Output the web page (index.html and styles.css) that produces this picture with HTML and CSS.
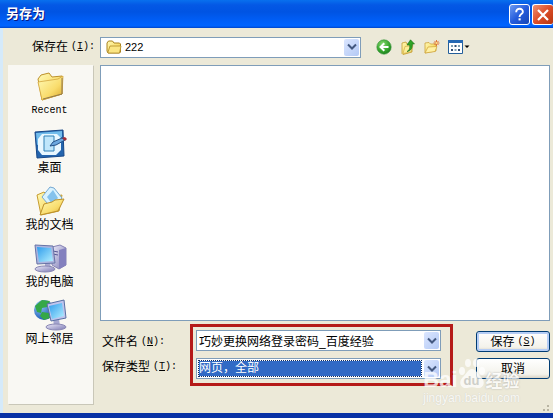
FILE: index.html
```html
<!DOCTYPE html>
<html lang="zh-CN">
<head>
<meta charset="utf-8">
<title>另存为</title>
<link rel="stylesheet" href="styles.css">
</head>
<body>
<svg class="defs" aria-hidden="true">
  <defs>
    <linearGradient id="gold" x1="0" y1="0" x2="1" y2="1"><stop offset="0" stop-color="#fffbb8"/><stop offset=".6" stop-color="#f9dc6c"/><stop offset="1" stop-color="#d9a52b"/></linearGradient>
    <linearGradient id="screen" x1="0" y1="0" x2="1" y2="1"><stop offset="0" stop-color="#2f9cec"/><stop offset="1" stop-color="#b4f0ff"/></linearGradient>
    <linearGradient id="metal" x1="0" y1="0" x2="1" y2="1"><stop offset="0" stop-color="#eceaf8"/><stop offset="1" stop-color="#7b79b4"/></linearGradient>
    <radialGradient id="green" cx=".4" cy=".3" r=".8"><stop offset="0" stop-color="#86d870"/><stop offset=".6" stop-color="#35a52c"/><stop offset="1" stop-color="#12731a"/></radialGradient>
    <radialGradient id="globe" cx=".3" cy=".3" r=".8"><stop offset="0" stop-color="#8fc8f8"/><stop offset="1" stop-color="#134faf"/></radialGradient>
  </defs>
</svg>
<main class="dialog">
  <header class="titlebar">
    <h1>另存为</h1>
    <button class="caption help" aria-label="帮助"><svg viewBox="0 0 20 20"><path d="M6.500 7.500C6.500 2.500 14 3 13.500 7.500C13.200 9.500 10 9.500 10 12.500" fill="none" stroke="#fff" stroke-width="2"/><path d="M9 14h2.200v2.200H9z" fill="#fff"/></svg></button>
    <button class="caption close" aria-label="关闭"><svg viewBox="0 0 20 20"><path d="M5 5l10 10M15 5L5 15" stroke="#fff" stroke-width="2.200"/></svg></button>
  </header>
  <div class="content">
    <div class="lookin">
      <label for="folder">保存在<span class="key">(<u>I</u>):</span></label>
      <div class="combo">
        <svg class="folder" viewBox="0 0 16 14"><path d="M1 11V3l1.500-2h4L8 3h5.500l1 1v8l-1 1H2z" fill="url(#gold)" stroke="#a98220"/><path d="M2 12l2-6h11l-1.500 7H2z" fill="#fbe583" stroke="#b38d29" stroke-width=".8"/></svg>
        <select id="folder"><option>222</option></select>
        <span class="arrow"><svg viewBox="0 0 10 8"><path d="M1 1.500l4 4 4-4" /></svg></span>
      </div>
      <nav class="tools">
        <button aria-label="后退"><svg viewBox="0 0 16 16"><circle cx="8" cy="8" r="7.200" fill="url(#green)" stroke="#38923a" stroke-width=".6"/><path d="M12.500 8H5M8.300 4.200L4.500 8l3.800 3.800" fill="none" stroke="#fff" stroke-width="2"/></svg></button>
        <button aria-label="向上"><svg viewBox="0 0 16 16"><path d="M2 4l4-1 1 2 5-1v9l-9 2.500-1-1z" fill="url(#gold)" stroke="#c39c30" stroke-width=".8"/><path d="M3 14.500l2-7 8-1-2 6.500z" fill="#fdee98" stroke="#c8a440" stroke-width=".6"/><path d="M7 12.500c2.500-1 3-3.500 2.700-6.500H7L10.500.8 14.500 5h-2.200c.2 4-1.300 7-5.300 7.500z" fill="#2fa526" stroke="#146c15" stroke-width=".6"/></svg></button>
        <button aria-label="新建文件夹"><svg viewBox="0 0 16 16"><path d="M1 14V4l4-.5L6.500 5H12v7z" fill="url(#gold)" stroke="#cda23a" stroke-width=".8"/><path d="M1 14l3-6 9-.5-2 5z" fill="#fff1a4" stroke="#cda23a" stroke-width=".7"/><path d="M12.500 1v6M9.500 4h6M10.400 1.900l4.200 4.200M14.600 1.900l-4.200 4.200" stroke="#dd7439" stroke-width="1"/><circle cx="12.500" cy="4" r="1" fill="#ffe58b"/></svg></button>
        <button class="views" aria-label="查看"><svg viewBox="0 0 22 16"><path d="M.5 1.500h14v13H.5z" fill="#fff" stroke="#245f9a"/><path d="M0 1h15v3H0z" fill="#2468b4"/><path d="M3 6h2v2H3zM10 6h2v2h-2zM6.500 10h2v2h-2z" fill="#7f9fb1"/><path d="M6.500 6h2v2h-2zM3 10h2v2H3zM10 10h2v2h-2z" fill="#314e75"/><path d="M16.500 6.500h5L19 9z" fill="#000"/></svg></button>
      </nav>
    </div>
    <aside class="places">
      <button><svg viewBox="0 0 34 32"><path d="M5 8l3-4 8-2 3 4 10-1v18L9 29z" fill="url(#gold)" stroke="#bd912b"/><path d="M5 11l20-3 5-3-1 18-20 6z" fill="url(#gold)" stroke="#d3a63d" stroke-width=".8"/><path d="M10 28l19-5V7" fill="none" stroke="#937b4a" stroke-width="1"/></svg><span class="key">Recent</span></button>
      <button><svg viewBox="0 0 34 32"><path d="M2 4l28-2 1 26-27 2z" fill="#2465ae" stroke="#174888"/><path d="M3 5l26-2v6L4 17z" fill="#72bdec"/><path d="M9 6h15l4 4v12l-5 5H9l-4-5V11z" fill="#e8f7ff"/><path d="M11 8h10v15H11z" fill="#bfe6fb" stroke="#3180b5"/><path d="M17 18l3-4 9-4 3 2-9 5z" fill="#6ca8df" stroke="#245288"/><path d="M29 10l3-1 2 2-2 2z" fill="#a22f39"/></svg><span>桌面</span></button>
      <button><svg viewBox="0 0 34 32"><path d="M4 10l7-3 5 5 13-2-3 16-18 4z" fill="url(#gold)" stroke="#c79d30"/><path d="M9 12l8-10 4 1 8 10-9 12z" fill="#d9f3ff" stroke="#75a8d1"/><path d="M14 12l6-7 5 8-6 6z" fill="#83c2ed"/><path d="M7 30l4-11 8-2 3-2 9-1-6 12z" fill="url(#gold)" stroke="#bd912b"/></svg><span>我的文档</span></button>
      <button><svg viewBox="0 0 34 32"><path d="M19 5l8-2 6 3v17l-7 4-7-4z" fill="url(#metal)" stroke="#8582b4"/><path d="M26 8l7-2v17l-7 4z" fill="#8481be"/><path d="M20 9l5 1M20 12l5 1" stroke="#575795"/><path d="M12 20h5l1 6h-6z" fill="#aaa9d0"/><ellipse cx="12" cy="27" rx="10" ry="3" fill="url(#metal)" stroke="#8987b4"/><path d="M2 3l18 1 2 17-18 1z" fill="#adb5df" stroke="#6773a5"/><path d="M4 5l14 1 2 13-14 1z" fill="url(#screen)"/></svg><span>我的电脑</span></button>
      <button><svg viewBox="0 0 34 32"><circle cx="11" cy="11" r="10" fill="url(#globe)"/><path d="M2 7l7-6 8 1-3 6-5 1-1 5-4-1zM9 13l7 1 1 5-6 2-4-4z" fill="#35a847"/><path d="M20 20h6l1 7h-6z" fill="#a6a7d0"/><ellipse cx="23" cy="28" rx="10" ry="3" fill="url(#metal)" stroke="#8987b4"/><path d="M14 5l17-4 2 18-15 3z" fill="#bfc4ed" stroke="#5970a3"/><path d="M16 7l13-3 2 13-12 3z" fill="url(#screen)"/></svg><span>网上邻居</span></button>
    </aside>
    <section class="files" aria-label="文件列表"></section>
    <form class="fields">
      <div class="labels">
        <label for="name">文件名<span class="key">(<u>N</u>):</span></label>
        <label for="type">保存类型<span class="key">(<u>T</u>):</span></label>
      </div>
      <div class="highlight">
        <div class="combo">
          <input id="name" type="text" value="巧妙更换网络登录密码_百度经验">
          <span class="arrow"><svg viewBox="0 0 10 8"><path d="M1 1.500l4 4 4-4" /></svg></span>
        </div>
        <div class="combo chosen">
          <select id="type"><option>网页，全部</option></select>
          <span class="arrow"><svg viewBox="0 0 10 8"><path d="M1 1.500l4 4 4-4" /></svg></span>
        </div>
      </div>
      <div class="actions">
        <button class="push default" type="button">保存<span class="key">(<u>S</u>)</span></button>
        <button class="push" type="button">取消</button>
      </div>
    </form>
  </div>
  <div class="watermark">
    <div class="brand"><b>Bai</b><span class="paw"><svg viewBox="0 0 28 32"><ellipse cx="4" cy="13" rx="3" ry="4"/><ellipse cx="10" cy="5" rx="3" ry="4"/><ellipse cx="18" cy="5" rx="3" ry="4"/><ellipse cx="24" cy="13" rx="3" ry="4"/><path d="M14 11c4 0 5 4 8 7 7 6 3 13-3 12-3-1-7-1-10 0-6 1-10-6-3-12 3-3 4-7 8-7z"/></svg><i>du</i></span><em>经验</em></div>
    <small>jingyan.baidu.com</small>
  </div>
  <svg class="grip" viewBox="0 0 8 8" aria-hidden="true"><path d="M5 1h2v2H5zM1 5h2v2H1zM5 5h2v2H5z"/></svg>
</main>
</body>
</html>
```
FILE: styles.css
```css
* { box-sizing: border-box; }
body {
  margin: 0;
  font: 12px/16px "Liberation Sans", "Noto Sans CJK SC", sans-serif;
  color: #000;
}
button, input, select { font: inherit; color: inherit; margin: 0; padding: 0; }
button { border: 0; background: none; }
svg { display: block; }
.defs { position: absolute; width: 0; height: 0; }
.key { font-family: "Liberation Mono", monospace; font-size: 10px; }

.dialog {
  position: relative;
  display: flex;
  flex-direction: column;
  min-height: 100vh;
  background: #ece9d8;
  border-bottom: 5px solid #0831a5;
}
.titlebar {
  display: flex;
  align-items: center;
  gap: 2px;
  height: 28px;
  padding-left: 6px;
  background: linear-gradient(#0870ee 0, #0458e5 5px, #0054e3 12px, #0060fa 22px, #0064ff 26px, #0044c8 28px);
}
h1 {
  flex: 1;
  margin: 0;
  font-size: 13px;
  line-height: 20px;
  color: #fff;
  text-shadow: 1px 1px #0a1883;
}
.caption {
  width: 21px;
  height: 21px;
  border: 1px solid #fff;
  border-radius: 3px;
}
.caption:last-child { border-right: 0; }
.help { background: linear-gradient(135deg, #6d9bf2, #255cdc 50%, #1746b5); }
.close { background: linear-gradient(135deg, #ee9275, #dc4e29 50%, #b7350f); }

.content {
  flex: 1;
  display: grid;
  grid-template: 37px 1fr 84px / 86px 1fr;
  column-gap: 6px;
  padding: 0 3px 8px 5px;
  border-left: 3px solid #d5eafa;
}
.lookin {
  grid-column: 1 / 3;
  display: flex;
  align-items: center;
  padding-top: 1px;
}
.lookin label { width: 92px; padding-left: 24px; }
label { display: flex; align-items: center; white-space: nowrap; }
label .key { margin-left: 3px; }
.combo {
  display: flex;
  align-items: center;
  height: 21px;
  padding: 1px;
  background: #fff;
  border: 1px solid #7f9db9;
}
.lookin .combo { flex: 0 1 261px; min-width: 0; }
.folder { width: 16px; height: 14px; margin: 0 3px 0 4px; flex: none; }
.combo select, .combo input {
  flex: 1;
  min-width: 0;
  height: 17px;
  border: 0;
  outline: 0;
  background: none;
  appearance: none;
}
.lookin .combo select { font-size: 11px; }
.arrow {
  display: grid;
  place-items: center;
  flex: none;
  width: 15px;
  height: 17px;
  border-radius: 2px;
  background: linear-gradient(135deg, #dbe6ff, #b3c9f5);
  pointer-events: none;
}
.arrow svg { width: 10px; height: 8px; }
.arrow path { fill: none; stroke: #43587f; stroke-width: 2; }
.tools { display: flex; gap: 8px; margin-left: 15px; }
.tools button { width: 16px; height: 16px; }
.tools .views { width: 22px; }

.places {
  grid-row: 2 / 4;
  display: flex;
  flex-direction: column;
  gap: 8px;
  padding: 5px 3px 0 0;
  background: #f9f8f3;
  border: 1px solid;
  border-color: #f9f8f3 #c9c7b8 #c9c7b8 #f9f8f3;
}
.places button { display: flex; flex-direction: column; align-items: center; height: 49px; }
.places svg { width: 34px; height: 32px; }
.places span { line-height: 16px; }
.files { background: #fff; border: 1px solid #7f9db9; }
.fields { display: flex; align-items: flex-start; padding-top: 3px; }
.labels {
  display: grid;
  gap: 9px;
  flex: 0 0 90px;
  padding: 10px 0 0 2px;
}
.highlight {
  flex: 1 1 263px;
  display: grid;
  gap: 6px;
  height: 62px;
  padding: 3px 9px 3px 3px;
  border: 3px solid #b51a18;
}
.highlight input { padding-left: 1px; }
.chosen select {
  margin: 0 3px 0 1px;
  height: 15px;
  line-height: 15px;
  color: #fff;
  background: #316ac5;
  outline: 1px dotted #142d5c;
}
.actions { flex: 0 0 74px; display: grid; gap: 6px; margin-left: 23px; padding-top: 7px; }
.push {
  display: flex;
  align-items: center;
  justify-content: center;
  height: 21px;
  border: 1px solid #003c74;
  border-radius: 3px;
  background: linear-gradient(#fff, #f3f2eb 80%, #d9d3c5);
}
.push .key { margin-left: 3px; }
.default { box-shadow: inset 0 0 0 2px #b5cdf5; }

.watermark {
  position: absolute;
  right: 33px;
  bottom: 7px;
  color: #fff;
  opacity: .75;
  pointer-events: none;
}
.brand { display: flex; align-items: flex-end; height: 32px; }
.brand b { font-size: 22px; line-height: 20px; }
.paw { position: relative; width: 28px; height: 32px; }
.paw svg { width: 28px; height: 32px; fill: #fff; }
.paw i {
  position: absolute;
  inset: 15px 0 0;
  font: bold 13px/15px "Liberation Sans", sans-serif;
  text-align: center;
  color: #c5c7c5;
}
.brand em { font: bold 17px/20px "Noto Sans CJK SC", sans-serif; text-shadow: 0 0 2px #999; }
.watermark small { display: block; font-size: 12px; line-height: 16px; text-shadow: 0 0 1px #bbb; }
.grip { position: absolute; right: 3px; bottom: 1px; width: 8px; height: 8px; fill: #b8b4a2; }
```
